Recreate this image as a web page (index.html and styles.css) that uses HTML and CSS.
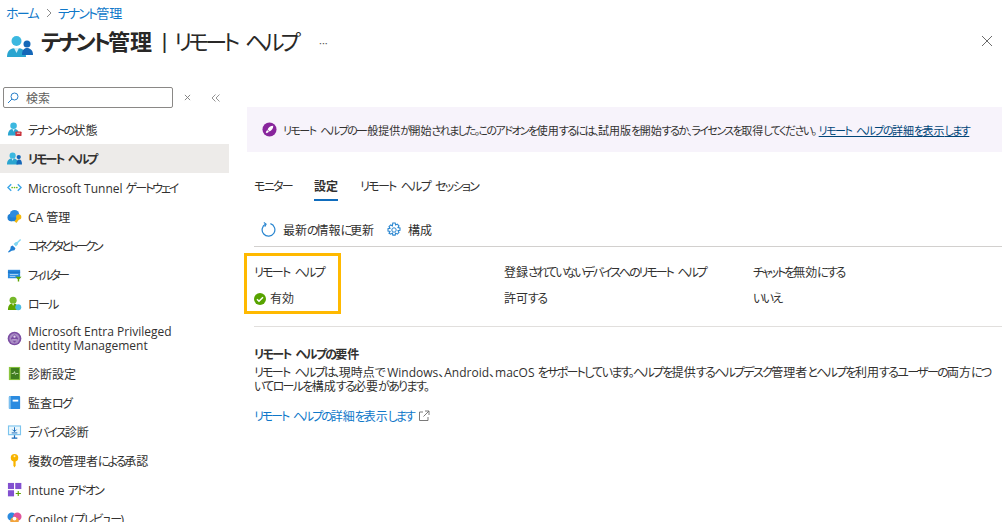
FILE: index.html
```html
<!DOCTYPE html>
<html lang="ja">
<head>
<meta charset="utf-8">
<title>テナント管理 | リモート ヘルプ</title>
<link rel="stylesheet" href="styles.css">
</head>
<body>
<header class="top">
  <nav class="crumbs"><a><span class="k">ホーム</span></a><svg class="chev" viewBox="0 0 8 10"><path d="M2 1l4 4-4 4" fill="none" stroke="#8a8a8a"/></svg><a><span class="k">テナント</span>管理</a></nav>
  <div class="title-row">
    <svg class="title-icon" viewBox="0 0 26 24"><circle cx="9.500" cy="7" r="5" fill="#3bb8e0"/><path d="M0 23c0-6 3-9 9.500-9s9.500 3 9.500 9z" fill="#2aa5d0"/><path d="M7 14l2.500 5 2.500-5z" fill="#d6f0f8"/><circle cx="20" cy="10" r="3.500" fill="#1467b8"/><path d="M15 21c0-5 2-7 5-7s6 2 6 7z" fill="#1467b8"/></svg>
    <h1 class="title"><b><span class="k">テナント</span>管理</b><span class="bar">|</span><span class="k sub">リモート ヘルプ</span></h1>
    <span class="more">···</span>
    <svg class="close" viewBox="0 0 12 12"><path d="M1 1l10 10M11 1L1 11" stroke="#6b6b6b" stroke-width="1" fill="none"/></svg>
  </div>
</header>
<div class="layout">
  <aside class="side">
    <div class="search-row">
      <div class="search"><svg class="glass" viewBox="0 0 12 12"><circle cx="7.500" cy="4.500" r="3.500" fill="none" stroke="#2a7fc9"/><path d="M5 7l-4 4" stroke="#2a7fc9" fill="none"/></svg><span>検索</span></div>
      <svg class="tool-x" viewBox="0 0 8 8"><path d="M1 1l6 6M7 1L1 7" stroke="#777" fill="none"/></svg>
      <svg class="collapse" viewBox="0 0 9 8"><path d="M4.500 .5L1 4l3.500 3.500M8.500 .5L5 4l3.500 3.500" stroke="#888" fill="none" stroke-width=".9"/></svg>
    </div>
    <ul class="menu">
      <li><svg viewBox="0 0 16 16"><circle cx="7" cy="4" r="3.500" fill="#3bb8e0"/><path d="M1 14.500c0-5 2-7 6-7s6 2 6 7z" fill="#2aa5d0"/><path d="M5.700 7.500L7 10.500l1.300-3z" fill="#d6f0f8"/><rect x="9" y="10" width="6.500" height="5" rx="1" fill="#c8323c"/><path d="M10.500 12h3.500" stroke="#fff" stroke-width=".8"/></svg><span><span class="k">テナントの</span>状態</span></li>
      <li class="on"><svg viewBox="0 0 16 16"><circle cx="6" cy="5" r="3.300" fill="#3bb8e0"/><path d="M0 14.500c0-4.500 2-6.500 6-6.500s6 2 6 6.500z" fill="#2aa5d0"/><path d="M4.800 8L6 10.500 7.200 8z" fill="#d6f0f8"/><circle cx="12.500" cy="6.500" r="2.300" fill="#1467b8"/><path d="M10 14.500c0-3.500 1-5.500 3-5.500s3 2 3 5.500z" fill="#1467b8"/></svg><span class="k k2">リモート ヘルプ</span></li>
      <li><svg viewBox="0 0 16 16"><path d="M4.500 4.500L1 8l3.500 3.500M11.500 4.500L15 8l-3.500 3.500" fill="none" stroke="#3aa5e8" stroke-width="1.500"/><circle cx="5.500" cy="8" r=".9" fill="#6cbb1a"/><circle cx="8" cy="8" r=".9" fill="#6cbb1a"/><circle cx="10.500" cy="8" r=".9" fill="#6cbb1a"/></svg><span>Microsoft Tunnel <span class="k k2">ゲートウェイ</span></span></li>
      <li><svg viewBox="0 0 16 16"><circle cx="4.500" cy="9" r="4" fill="#1f7fd4"/><circle cx="8" cy="6" r="5" fill="#2b8be0"/><path d="M4 9h7v4H4z" fill="#1f7fd4"/><circle cx="12.500" cy="8.500" r="2.800" fill="#f2b90f"/><path d="M8 13l3-4 2 2-3 4z" fill="#f2b90f"/></svg><span>CA 管理</span></li>
      <li><svg viewBox="0 0 16 16"><path d="M1 15l2.500-3 .5-3 2-1 3 3-1 2-3 .5L2 15.500z" fill="#1f7fd4"/><path d="M7 6.500l2-2 2-.5 3-3 1 1-3 3-.5 2-2 2z" fill="#7fd6f2"/></svg><span class="k k3">コネクタとトークン</span></li>
      <li><svg viewBox="0 0 16 16"><rect x="1" y="3" width="13" height="9" fill="#2b8be0"/><path d="M1 5.500h13" stroke="#1467b8"/><path d="M3 8h9M3 10h6" stroke="#cfe8fb" stroke-width=".8"/><path d="M9 10.500h6.500l-2.500 2.500v2.500h-1.500V13z" fill="#5ea500"/></svg><span class="k k3">フィルター</span></li>
      <li><svg viewBox="0 0 16 16"><circle cx="6.500" cy="4.500" r="3.800" fill="#76b82a"/><path d="M1 15c0-5 2-7 5.500-7S12 10 12 15z" fill="#5ea500"/><path d="M5.300 8L6.500 10.500 7.700 8z" fill="#e4f2d2"/><circle cx="12" cy="12" r="3.200" fill="#4cbce0"/></svg><span class="k">ロール</span></li>
      <li class="two"><svg viewBox="0 0 16 16"><circle cx="8" cy="8" r="7.300" fill="#7b4da3"/><circle cx="8" cy="8" r="5.500" fill="#a98cc4"/><path d="M8 3.500l4 4.500-4 4.500L4 8z" fill="#7b4da3"/><circle cx="8" cy="6" r="1.200" fill="#e4d8ee"/><path d="M5.500 9.500h5" stroke="#e4d8ee"/></svg><span>Microsoft Entra Privileged<br>Identity Management</span></li>
      <li><svg viewBox="0 0 16 16"><rect x="2" y="1" width="12" height="14" fill="#8cc63f"/><rect x="4" y="2" width="9" height="12" fill="#3f7d20"/><path d="M5 8h2l1-2 1 3 1-1h2" stroke="#e4f2d2" fill="none" stroke-width=".8"/></svg><span>診断設定</span></li>
      <li><svg viewBox="0 0 16 16"><rect x="2" y="1" width="12" height="14" rx="1" fill="#2b8be0"/><path d="M2 2v12a1 1 0 0 0 1 1h1V1H3a1 1 0 0 0-1 1z" fill="#7cc0f0"/><rect x="6" y="5" width="6" height="2" fill="#fff"/></svg><span>監査<span class="k">ログ</span></span></li>
      <li><svg viewBox="0 0 16 16"><rect x="1" y="1.500" width="14" height="10.500" fill="#7cc4ee"/><rect x="2.200" y="2.700" width="11.600" height="8" fill="#eaf7fd"/><path d="M8 3.500V8M5.800 6L8 8.200 10.200 6M5 9.500h6" stroke="#1467b8" fill="none"/><path d="M5 15h6M8 12v3" stroke="#1467b8" stroke-width="1.300"/></svg><span><span class="k">デバイス</span>診断</span></li>
      <li><svg viewBox="0 0 16 16"><circle cx="8" cy="5" r="4" fill="#f8b400"/><path d="M6.800 8h2.400v5.500L8 15.500l-1.200-2z" fill="#f8b400"/><circle cx="8" cy="3.500" r="1" fill="#fff3c4"/></svg><span>複数<span class="k">の</span>管理者<span class="k k2">による</span>承認</span></li>
      <li><svg viewBox="0 0 16 16"><rect x="1" y="1" width="6.500" height="6.500" fill="#8250d0"/><rect x="8.800" y="1" width="6.500" height="6.500" fill="#8250d0"/><rect x="1" y="8.800" width="6.500" height="6.500" fill="#8250d0"/><path d="M12 9.500v5.500M9.300 12.200h5.500" stroke="#5ea500" stroke-width="1.200"/></svg><span>Intune <span class="k">アドオン</span></span></li>
      <li><svg viewBox="0 0 16 16"><circle cx="5" cy="6" r="4.500" fill="#2b8be0"/><circle cx="11" cy="6" r="4.500" fill="#e0559a"/><circle cx="8" cy="11" r="4.500" fill="#f2a33a"/><circle cx="8" cy="8" r="2" fill="#fff"/></svg><span>Copilot (<span class="k">プレビュー</span>)</span></li>
    </ul>
  </aside>
  <main class="main">
    <div class="banner">
      <svg class="rocket" viewBox="0 0 16 16"><circle cx="8" cy="8" r="7.500" fill="#88259c"/><path d="M12 4c-3 0-5 1.500-6 4l2 2c2.500-1 4-3 4-6zM5.500 8.500L4 11l1 1 2.500-1.500z" fill="#fff"/></svg>
      <span><span class="k">リモート ヘルプの</span>一般提供<span class="k">が</span>開始<span class="k">されました。このアドオンを</span>使用<span class="k">するには、</span>試用版<span class="k">を</span>開始<span class="k">するか、ライセンスを</span>取得<span class="k">してください。</span></span><a class="banner-link"><span class="k">リモート ヘルプの</span>詳細<span class="k">を</span>表示<span class="k">します</span></a>
    </div>
    <div class="tabs">
      <span class="tab"><span class="k">モニター</span></span>
      <span class="tab active">設定</span>
      <span class="tab"><span class="k">リモート ヘルプ セッション</span></span>
    </div>
    <div class="toolbar">
      <svg class="tb-icon" viewBox="0 0 16 16"><path d="M5 2.200A6.800 6.800 0 1 0 10 1.800" fill="none" stroke="#2a86d0" stroke-width="1.300"/><path d="M3 .5l2.500 1.700L4 5" fill="none" stroke="#2a86d0" stroke-width="1.100"/></svg>
      <span class="tb-label">最新<span class="k k2">の</span>情報<span class="k k2">に</span>更新</span>
      <svg class="tb-icon gear" viewBox="0 0 16 16"><circle cx="8" cy="8" r="2.200" fill="none" stroke="#2a86d0"/><path d="M6.800 1h2.400l.4 2 1.700-.9 1.700 1.700-1 1.700 2 .4v2.400l-2 .4 1 1.700-1.700 1.700-1.700-1-.4 2H6.800l-.4-2-1.700 1L3 11.200l1-1.700-2-.4V6.700l2-.4-1-1.700L4.700 2.900l1.700.9z" fill="none" stroke="#2a86d0" stroke-width="1.100"/></svg>
      <span class="tb-label">構成</span>
    </div>
    <div class="props">
      <div class="prop"><span class="k">リモート ヘルプ</span><span class="val"><svg class="ok" viewBox="0 0 12 12"><circle cx="6" cy="6" r="6" fill="#57a300"/><path d="M3 6.200l2 2 4-4" stroke="#fff" stroke-width="1.500" fill="none"/></svg><span>有効</span></span></div>
      <div class="prop"><span>登録<span class="k k2">されていないデバイスへのリモート ヘルプ</span></span><span class="val"><span>許可<span class="k">する</span></span></span></div>
      <div class="prop"><span><span class="k k2">チャットを</span>無効<span class="k k2">にする</span></span><span class="val k">いいえ</span></div>
      <div class="mark"></div>
    </div>
    <section class="req">
      <h2><span class="k">リモート ヘルプの</span>要件</h2>
      <p><span class="k">リモート ヘルプは、</span>現時点<span class="k">で</span> Windows、Android、macOS <span class="k">をサポートしています。ヘルプを</span>提供<span class="k">するヘルプデスク</span>管理者<span class="k">とヘルプを</span>利用<span class="k">するユーザーの</span>両方<span class="k">につ</span><br><span class="k">いてロールを</span>構成<span class="k">する</span>必要<span class="k">があります。</span></p>
      <a class="ext"><span><span class="k k2">リモート ヘルプの</span>詳細<span class="k k2">を</span>表示<span class="k k2">します</span></span><svg viewBox="0 0 12 12"><path d="M5 2H1.500v8.500H10V7M7 1h4v4M11 1L5.500 6.500" fill="none" stroke="#6b6b6b" stroke-width=".9"/></svg></a>
    </section>
  </main>
</div>
</body>
</html>
```
FILE: styles.css
```css
* { box-sizing: border-box; }
html, body { margin: 0; height: 522px; overflow: hidden; background: #fff; }
body {
  font-family: "Open Sans", "Noto Sans CJK JP", sans-serif;
  font-feature-settings: "palt";
  font-size: 12px;
  color: #323130;
  width: 1007px;
}
.k { letter-spacing: -.14em; word-spacing: .3em; }
.k2 { letter-spacing: -.17em; }
.k3 { letter-spacing: -.22em; }
.top { height: 84px; padding: 4px 14px 0 6px; }
.crumbs { display: flex; align-items: center; height: 17px; color: #0f78c9; font-size: 13px; }
.chev { width: 8px; height: 10px; margin: 0 5px 0 7px; }
.title-row { display: flex; align-items: center; height: 36px; margin-top: 2px; }
.title-icon { width: 26px; height: 24px; margin: 9px 8px 0 1px; }
.title { margin: 0; font-size: 22px; font-weight: 400; color: #292827; display: flex; align-items: center; line-height: 34px; }
.title b { font-weight: 700; }
.bar { margin: 0 4px 0 7px; font-weight: 600; font-size: 20px; }
.sub { letter-spacing: -.17em; }
.more { margin: 3px 0 0 22px; color: #555; font-size: 11px; }
.close { width: 12px; height: 12px; margin-left: auto; }
.layout { display: flex; height: 438px; }
.side { width: 229px; flex: none; overflow: hidden; }
.search-row { display: flex; align-items: center; height: 21px; margin: 3px 0 7px 3px; }
.search { width: 170px; height: 21px; border: 1px solid #8a8886; border-radius: 2px; display: flex; align-items: center; padding-left: 3px; color: #605e5c; }
.glass { width: 12px; height: 12px; margin-right: 7px; }
.tool-x { width: 7px; height: 7px; margin-left: 11px; }
.collapse { width: 9px; height: 8px; margin-left: 20px; }
.menu { list-style: none; margin: 7px 0 0; padding: 0; }
.menu li { display: flex; align-items: center; height: 29px; padding-left: 7px; white-space: nowrap; color: #323130; }
.menu li svg { width: 15px; height: 15px; margin-right: 6px; flex: none; }
.menu li.on { background: #edebe9; font-weight: 700; }
.menu li.two { height: 41px; line-height: 14px; }
.main { flex: 1; min-width: 0; padding: 0 5px 0 18px; position: relative; }
.banner { height: 45px; margin-top: 23px; background: #f7f3fb; display: flex; align-items: center; padding-left: 15px; font-size: 11px; white-space: nowrap; }
.rocket { width: 15px; height: 15px; margin-right: 6px; flex: none; }
.banner-link { color: #004578; text-decoration: underline; margin-left: 3px; }
.tabs { display: flex; gap: 22px; padding-left: 7px; margin-top: 23px; height: 26px; }
.tab { height: 26px; line-height: 23px; }
.tab.active { font-weight: 700; border-bottom: 2px solid #0f6cbd; }
.toolbar { display: flex; align-items: center; margin: 15px 0 0 7px; height: 31px; padding: 0 0 3px 7px; border-bottom: 1px solid #d2d0ce; }
.tb-icon { width: 15px; height: 15px; margin-right: 7px; }
.gear { width: 16px; height: 16px; margin-left: 12px; margin-right: 6px; }
.props { position: relative; display: grid; grid-template-columns: 250px 249px 1fr; margin-left: 7px; height: 80px; padding-top: 17px; border-bottom: 1px solid #e1dfdd; }
.prop { display: flex; flex-direction: column; gap: 9px; line-height: 17px; }
.val { display: flex; align-items: center; gap: 4px; }
.ok { width: 12px; height: 12px; }
.mark { position: absolute; left: -10px; top: 6px; width: 97px; height: 61px; border: 3px solid #ffb900; }
.req { margin-left: 7px; padding-top: 20px; }
.req h2 { margin: 0; font-size: 12px; line-height: 16px; font-weight: 700; }
.req p { margin: 3px 0 0; line-height: 14px; width: 748px; white-space: nowrap; }
.ext { display: inline-flex; align-items: center; gap: 4px; margin-top: 13px; color: #0f78c9; }
.ext svg { width: 12px; height: 12px; }
```
